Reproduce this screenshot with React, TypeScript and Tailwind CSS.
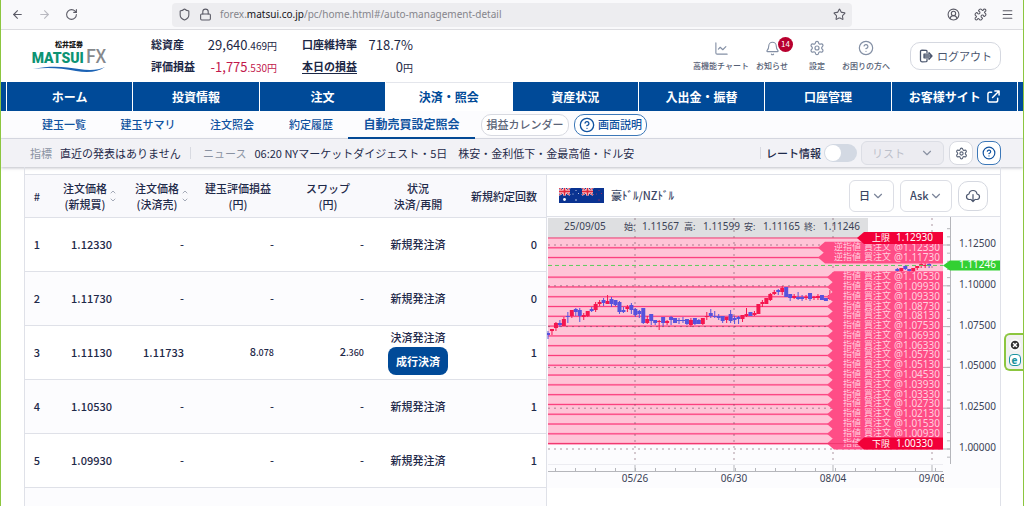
import type { ReactNode } from "react";
import {
  ArrowLeft,
  ArrowRight,
  Bell,
  ChevronDown,
  ChevronUp,
  CircleHelp,
  CircleUserRound,
  CircleX,
  LineChart,
  Lock,
  Menu,
  Puzzle,
  RotateCw,
  Settings,
  Shield,
  Star,
} from "lucide-react";

const MAIN_NAV = ["ホーム", "投資情報", "注文", "決済・照会", "資産状況", "入出金・振替", "口座管理", "お客様サイト"];

const SUB_NAV = [
  { label: "建玉一覧", width: "w-[84px]" },
  { label: "建玉サマリ", width: "w-[84px]" },
  { label: "注文照会", width: "w-[84px]" },
  { label: "約定履歴", width: "w-[74px]" },
];

const ORDERS = [
  { no: 1, buy: "1.12330", status: "新規発注済", count: 0 },
  { no: 2, buy: "1.11730", status: "新規発注済", count: 0 },
  { no: 3, buy: "1.11130", sell: "1.11733", pl: ["8", ".078"], swap: ["2", ".360"], status: "決済発注済", count: 1, closable: true },
  { no: 4, buy: "1.10530", status: "新規発注済", count: 1 },
  { no: 5, buy: "1.09930", status: "新規発注済", count: 1 },
];

const STOP_ORDERS = [1.1233, 1.1173];
const LIMIT_ORDERS = [
  1.1053, 1.0993, 1.0933, 1.0873, 1.0813, 1.0753, 1.0693, 1.0633, 1.0573, 1.0513, 1.0453, 1.0393, 1.0333, 1.0273,
  1.0213, 1.0153, 1.0093, 1.0033,
];

// slot, rising?, high, body top, body bottom, low
const CANDLES: [number, 0 | 1, number, number, number, number][] = [
  [0, 0, 51, 53, 55, 59], [1, 1, 49, 49, 51, 55], [2, 1, 42, 43, 48, 51], [3, 0, 40, 43, 45, 47],
  [4, 1, 37, 39, 46, 46], [5, 0, 32, 36, 37, 43], [6, 1, 30, 30, 36, 38], [7, 0, 28, 29, 32, 36],
  [8, 0, 28, 30, 36, 42], [9, 1, 33, 35, 37, 40], [10, 1, 31, 31, 36, 37], [11, 0, 27, 29, 31, 32],
  [12, 1, 22, 24, 30, 32], [13, 1, 20, 22, 24, 26], [14, 0, 18, 20, 23, 26], [15, 1, 15, 21, 24, 24],
  [16, 0, 17, 19, 24, 27], [17, 0, 20, 20, 25, 26], [18, 0, 21, 22, 32, 34], [19, 0, 27, 30, 32, 33],
  [20, 1, 25, 27, 29, 32], [21, 0, 23, 25, 30, 34], [22, 0, 28, 29, 35, 37], [23, 0, 30, 31, 34, 38],
  [24, 0, 28, 28, 43, 44], [25, 1, 36, 39, 43, 44], [26, 0, 34, 34, 41, 45], [27, 0, 40, 40, 43, 45],
  [28, 1, 40, 41, 42, 50], [29, 0, 37, 37, 43, 46], [30, 1, 40, 41, 43, 45], [31, 0, 36, 37, 40, 45],
  [32, 0, 38, 38, 43, 43], [33, 0, 38, 40, 41, 44], [34, 0, 37, 40, 41, 43], [35, 0, 39, 39, 44, 45],
  [36, 1, 38, 40, 45, 47], [37, 0, 38, 38, 44, 45], [38, 0, 39, 40, 44, 44], [39, 1, 38, 38, 44, 45],
  [40, 1, 32, 36, 37, 40], [41, 0, 29, 33, 36, 38], [42, 0, 31, 36, 37, 38], [43, 0, 34, 36, 38, 40],
  [44, 0, 36, 36, 41, 43], [45, 1, 37, 37, 40, 43], [46, 0, 30, 34, 41, 43], [47, 0, 36, 38, 40, 44],
  [48, 0, 36, 37, 39, 44], [49, 1, 35, 35, 39, 42], [50, 1, 28, 34, 36, 37], [51, 0, 32, 32, 36, 36],
  [52, 1, 31, 33, 35, 36], [53, 1, 24, 24, 34, 34], [54, 1, 20, 22, 24, 27], [55, 1, 18, 18, 24, 24],
  [56, 1, 13, 14, 20, 21], [57, 1, 10, 12, 14, 15], [58, 0, 9, 10, 12, 15], [59, 1, 6, 8, 12, 15],
  [60, 0, 7, 7, 17, 17], [61, 0, 14, 14, 18, 21], [62, 1, 14, 16, 18, 19], [63, 0, 12, 17, 19, 20],
  [64, 0, 15, 17, 19, 21], [65, 1, 15, 17, 18, 20], [66, 0, 13, 13, 19, 21], [67, 1, 16, 17, 18, 20],
  [68, 1, 14, 16, 18, 20], [69, 0, 15, 15, 20, 20], [70, 0, 18, 18, 21, 21], [71, 1, 10, 15, 19, 20],
  [88, 0, -12, -11, -9, -8], [89, 1, -12, -12, -9, -8], [90, 0, -15, -14, -11, -10], [91, 0, -11, -11, -9, -8],
  [92, 1, -12, -12, -9, -8], [93, 1, -14, -14, -12, -10], [94, 1, -17, -16, -14, -12], [95, 1, -17, -15, -14, -12],
  [96, 0, -17, -16, -14, -12],
];

const AXIS_PRICES = [1.125, 1.1, 1.075, 1.05, 1.025, 1.0];
const AXIS_DATES = [
  { x: 88, label: "05/26" },
  { x: 187, label: "06/30" },
  { x: 286, label: "08/04" },
  { x: 385, label: "09/06" },
];

const PLOT_RIGHT = 396;
const priceY = (price: number) => 232 - (price - 1) * 1632;

function tag(tip: number, y: number, right: number, half: number) {
  return `${tip},${y} ${tip + 7},${y - half} ${right},${y - half} ${right},${y + half} ${tip + 7},${y + half}`;
}

function OrderTag({ price, stop }: { price: number; stop?: boolean }) {
  const y = priceY(price);
  return (
    <g>
      <polygon points={tag(stop ? 271 : 280, y, PLOT_RIGHT, 6)} fill="#ff4d86" />
      <g fill="#ffd0df" fontSize="9">
        <text x={stop ? 287 : 296} y={y + 2}>{stop ? "逆指値" : "指値"}</text>
        <text x="317" y={y + 2}>買注文</text>
        <text x="347" y={y + 3} fontSize="10">@{price.toFixed(5)}</text>
      </g>
    </g>
  );
}

function LimitTag({ price, label }: { price: number; label: string }) {
  const y = priceY(price);
  return (
    <g>
      <line x1="1" x2="320" y1={y} y2={y} stroke="#f0386f" />
      <polygon points={tag(310, y, PLOT_RIGHT, 6)} fill="#f20038" />
      <text x="325" y={y + 3} fontSize="9" fill="#fff">{label}</text>
      <text x="349" y={y + 3} fontSize="10" fill="#fff">{price.toFixed(5)}</text>
    </g>
  );
}

function PriceChart() {
  const top = priceY(1.1293);
  const bottom = priceY(1.0033);
  const now = priceY(1.11246);
  const minorPrices = Array.from({ length: 29 }, (_, i) => 0.995 + i * 0.005);
  const minorDates = Array.from({ length: 20 }, (_, i) => 9 + i * 20);

  return (
    <svg viewBox="0 0 453 271" className="block w-full font-['Noto_Sans','Noto_Sans_CJK_JP',sans-serif]" role="img" aria-label="豪ドル/NZドル 日足">
      <rect width="453" height="271" fill="#fcfcfe" />
      <rect x="1" y="1" width="320" height="21" fill="#dedfe1" />
      <rect x="1" y={top} width={PLOT_RIGHT - 1} height={bottom - top} fill="#ffc4d7" />

      {[...STOP_ORDERS, ...LIMIT_ORDERS].map((p) => (
        <g key={p}>
          <line x1="1" x2="290" y1={priceY(p)} y2={priceY(p)} stroke="#ff9dbc" strokeWidth="2" />
          <line x1="1" x2="290" y1={priceY(p)} y2={priceY(p)} stroke="#fb3b7c" />
        </g>
      ))}
      <g stroke="#6b4455" strokeOpacity="0.55" strokeDasharray="2 4">
        {AXIS_PRICES.map((p) => (
          <line key={p} x1="1" x2={PLOT_RIGHT} y1={priceY(p)} y2={priceY(p)} />
        ))}
        {AXIS_DATES.map((d) => (
          <line key={d.x} x1={d.x} x2={d.x} y1="1" y2="246" />
        ))}
      </g>

      {CANDLES.map(([slot, up, high, t, b, low]) => {
        const x = 1 + slot * 3.97;
        const color = up ? "#f5164f" : "#5752dc";
        return (
          <g key={slot} fill={color}>
            <rect x={x - 0.5} y={high + 63} width="1" height={low - high} />
            <rect x={x - 2} y={t + 63} width="4" height={Math.max(b - t, 1)} />
          </g>
        );
      })}

      <line x1="1" x2={PLOT_RIGHT} y1={now} y2={now} stroke="#5ccb5c" strokeDasharray="4 3" />
      {STOP_ORDERS.map((p) => <OrderTag key={p} price={p} stop />)}
      {LIMIT_ORDERS.map((p) => <OrderTag key={p} price={p} />)}
      <LimitTag price={1.1293} label="上限" />
      <LimitTag price={1.0033} label="下限" />

      <g fill="#3b4256" fontSize="10">
        <text x="17" y="13">25/09/05</text>
        <text x="77" y="13" fontSize="9">始:</text>
        <text x="95" y="13">1.11567</text>
        <text x="137" y="13" fontSize="9">高:</text>
        <text x="156" y="13">1.11599</text>
        <text x="197" y="13" fontSize="9">安:</text>
        <text x="216" y="13">1.11165</text>
        <text x="257" y="13" fontSize="9">終:</text>
        <text x="276" y="13">1.11246</text>
      </g>

      {/* price axis */}
      <line x1="1" x2={PLOT_RIGHT} y1="247.5" y2="247.5" stroke="#ececf1" />
      <g stroke="#b5b6bb">
        <line x1="403.5" x2="403.5" y1="0" y2="247" />
        {minorPrices.map((p) => (
          <line key={p} x1="400" x2="403" y1={priceY(p)} y2={priceY(p)} />
        ))}
        {AXIS_PRICES.map((p) => (
          <line key={p} x1="396" x2="403" y1={priceY(p)} y2={priceY(p)} />
        ))}
      </g>
      {AXIS_PRICES.map((p) => (
        <text key={p} x="412" y={priceY(p) + 2} fontSize="10" fill="#3b4256">{p.toFixed(5)}</text>
      ))}
      <polygon points={tag(396, now, 453, 5)} fill="#33d033" />
      <text x="412" y={now + 3} fontSize="10" fill="#fff">1.11246</text>

      {/* date axis */}
      <g stroke="#b5b6bb">
        <line x1="1" x2={PLOT_RIGHT} y1="254.5" y2="254.5" />
        {minorDates.map((x) => (
          <line key={x} x1={x - 0.5} x2={x - 0.5} y1="251" y2="254" />
        ))}
        {AXIS_DATES.map((d) => (
          <line key={d.x} x1={d.x} x2={d.x} y1="248" y2="254" />
        ))}
      </g>
      <g fontSize="10" fill="#3b4256" textAnchor="middle">
        {AXIS_DATES.map((d) => (
          <text key={d.x} x={d.x} y="265">{d.label}</text>
        ))}
      </g>
      <rect x="397" y="255" width="56" height="15" fill="#fcfcfe" />
    </svg>
  );
}

function UnionFlag({ x }: { x: number }) {
  return (
    <g transform={`translate(${x} 0)`}>
      <path d="M0 0 11 7M11 0 0 7" stroke="#fff" strokeWidth="2" />
      <path d="M0 0 11 7M11 0 0 7" stroke="#e2293c" strokeWidth="1" />
      <path d="M5.5 0V7.5M0 3.5H11" stroke="#fff" strokeWidth="3" />
      <path d="M5.5 0V7.5M0 3.5H11" stroke="#e2293c" strokeWidth="1.8" />
    </g>
  );
}

function PairFlags() {
  return (
    <svg viewBox="0 0 45 15" className="h-[15px] w-[45px]" aria-hidden="true">
      <rect width="45" height="15" fill="#0a3391" />
      <UnionFlag x={0} />
      <UnionFlag x={23} />
      <g fill="#fff">
        <circle cx="5.5" cy="11.5" r="1.4" />
        <circle cx="17" cy="2.5" r=".5" />
        <circle cx="14" cy="6" r=".5" />
        <circle cx="19.5" cy="5.5" r=".5" />
        <circle cx="17" cy="12" r=".7" />
      </g>
      <g fill="#a82a58">
        <circle cx="40" cy="2.5" r=".6" />
        <circle cx="37.5" cy="6" r=".6" />
        <circle cx="42.5" cy="5.5" r=".6" />
        <circle cx="40" cy="12" r=".7" />
      </g>
    </svg>
  );
}

function Logo() {
  return (
    <a href="#home" className="flex w-[80px] flex-col items-center leading-none" aria-label="松井証券 MATSUI FX">
      <span className="text-[7px] leading-[8px] font-black text-[#1a1a1a]">松井証券</span>
      <span className="flex items-baseline gap-[2px] leading-[15px]">
        <span className="font-['Roboto',sans-serif] text-[14px] font-black text-[#0d9373]">MATSUI</span>
        <span className="text-[18px] font-medium text-[#85888c]">FX</span>
      </span>
      <svg viewBox="0 0 74 6" className="h-[6px] w-[74px]" aria-hidden="true">
        <path d="M1 3C20-1 34 1 47 3 58 5 67 4 73 1 66 6 56 7 44 5 29 2 15 1 1 3Z" fill="#1c63b5" />
      </svg>
    </a>
  );
}

function ExitIcon() {
  return (
    <svg viewBox="0 0 14 14" className="size-[14px]" fill="none" stroke="currentColor" strokeWidth="1.3" strokeLinecap="round" strokeLinejoin="round" aria-hidden="true">
      <path d="M8 3.5V2.2Q8 1.5 7.2 1.3L3 1.2Q1.5 1.2 1.5 2.7V11.3Q1.5 12.8 3 12.8L7.2 12.7Q8 12.5 8 11.8V10.5M5 5.2V8.8H10M5 5.2H10M10 3.8 13 7 10 10.2M5 7H12.5" />
    </svg>
  );
}

function ExternalIcon() {
  return (
    <svg viewBox="0 0 14 14" className="size-[13px]" fill="none" stroke="currentColor" strokeWidth="1.6" strokeLinecap="round" strokeLinejoin="round" aria-hidden="true">
      <path d="M5 2.5H3Q1 2.5 1 4.5V11Q1 13 3 13H9.5Q11.5 13 11.5 11V9M8.5 1H13V5.5M13 1 6 8" />
    </svg>
  );
}

function CloudIcon() {
  return (
    <svg viewBox="0 0 16 16" className="size-4" fill="none" stroke="currentColor" strokeWidth="1.2" strokeLinecap="round" strokeLinejoin="round" aria-hidden="true">
      <path d="M5 11.5H4Q1.5 11 1.5 8.7T4 6Q4.5 2.5 8 2.5T12 6Q14.5 6.4 14.5 8.8T12 11.5H11M8 6.5V13.5M5.8 11.3 8 13.5 10.2 11.3" />
    </svg>
  );
}

function HeaderLink({ icon, label, width, badge }: { icon: ReactNode; label: string; width: string; badge?: number }) {
  return (
    <a href="#" className={`${width} relative flex flex-col items-center gap-1 text-[#8490a5]`}>
      {icon}
      <span className="text-[8px] leading-[12px] font-medium whitespace-nowrap text-[#566075]">{label}</span>
      {badge !== undefined && (
        <span className="absolute -top-1 left-[29px] flex size-[15px] items-center justify-center rounded-full bg-[#b8002e] text-[8px] text-white">
          {badge}
        </span>
      )}
    </a>
  );
}

function SortMarks() {
  return (
    <span className="absolute top-1/2 right-[4px] flex -translate-y-1/2 flex-col text-[#a5abb8]">
      <ChevronUp className="size-[8px]" strokeWidth={3} />
      <ChevronDown className="size-[8px]" strokeWidth={3} />
    </span>
  );
}

function ChartSelect({ label, value, width }: { label: string; value: string; width: string }) {
  return (
    <span className={`${width} relative block`}>
      <select
        aria-label={label}
        className="h-8 w-full appearance-none rounded-md border border-[#dcdee5] bg-white pl-[9px] text-[11px] font-medium text-[#3b4663]"
      >
        <option>{value}</option>
      </select>
      <ChevronDown className="pointer-events-none absolute top-[9px] right-[9px] size-[14px] text-[#7b8499]" />
    </span>
  );
}

function Amount({ parts }: { parts?: string[] }) {
  if (!parts) return <>-</>;
  return (
    <>
      {parts[0]}
      <span className="text-[9px]">{parts[1]}</span>
    </>
  );
}

export default function App() {
  return (
    <div className="relative flex h-screen flex-col overflow-hidden border-x border-[#8cc63f] bg-white font-['Noto_Sans_CJK_JP',sans-serif] text-[11px] text-[#1f2a4a]">
      {/* browser toolbar */}
      <div className="flex h-[30px] shrink-0 items-center border-b border-[#dcdce0] bg-[#f9f9fb] text-[#5b5b66]">
        <div className="flex w-[171px] items-center gap-[14px] pl-[10px]">
          <button aria-label="戻る"><ArrowLeft className="size-[13px]" /></button>
          <button aria-label="進む" className="text-[#b9b9c0]"><ArrowRight className="size-[13px]" /></button>
          <button aria-label="再読み込み"><RotateCw className="size-[13px]" /></button>
        </div>
        <div className="flex h-6 flex-1 items-center gap-2 rounded bg-[#ededf0] px-[6px]">
          <Shield className="size-[13px]" />
          <Lock className="size-[13px]" />
          <p className="flex-1 font-['Noto_Sans',sans-serif] text-[10px] text-[#85858c]">
            forex.<span className="text-[#15141a]">matsui.co.jp</span>/pc/home.html#/auto-management-detail
          </p>
          <Star className="size-[13px]" />
        </div>
        <div className="flex w-[171px] items-center justify-end gap-[14px] pr-[9px]">
          <CircleUserRound className="size-[13px]" />
          <Puzzle className="size-[13px]" />
          <Menu className="size-[13px]" />
        </div>
      </div>

      <header className="flex h-[52px] shrink-0 items-center pr-[22px] pl-[28px]">
        <Logo />
        <dl className="ml-[42px] grid grid-cols-[50px_76px_80px_56px] text-[10px] leading-[21px] text-[#1c2745]">
          <dt className="text-[11px] font-bold">総資産</dt>
          <dd className="text-right whitespace-nowrap"><span className="text-[13px]">29,640</span>.469円</dd>
          <dt className="pl-[25px] text-[11px] font-bold whitespace-nowrap">口座維持率</dt>
          <dd className="text-right text-[13px] whitespace-nowrap">718.7%</dd>
          <dt className="text-[11px] font-bold">評価損益</dt>
          <dd className="text-right whitespace-nowrap text-[#c2184b]"><span className="text-[13px]">-1,775</span>.530円</dd>
          <dt className="pl-[25px] text-[11px] font-bold whitespace-nowrap"><a href="#" className="underline underline-offset-2">本日の損益</a></dt>
          <dd className="text-right whitespace-nowrap"><span className="text-[13px]">0</span>円</dd>
        </dl>
        <div className="ml-auto flex items-center">
          <HeaderLink width="w-[56px]" label="高機能チャート" icon={<LineChart className="size-[15px]" strokeWidth={1.8} />} />
          <HeaderLink width="w-[46px]" label="お知らせ" badge={14} icon={<Bell className="size-[15px]" strokeWidth={1.8} />} />
          <HeaderLink width="w-[44px]" label="設定" icon={<Settings className="size-[16px]" strokeWidth={1.8} />} />
          <HeaderLink width="w-[54px]" label="お困りの方へ" icon={<CircleHelp className="size-[16px]" strokeWidth={1.8} />} />
          <button className="ml-[17px] flex h-7 w-[91px] items-center justify-center gap-1 rounded-[10px] border border-[#d5d8e0] text-[#4a556d]">
            <ExitIcon />
            ログアウト
          </button>
        </div>
      </header>

      <nav className="flex h-[29px] shrink-0 gap-px text-[12px] font-bold text-white">
        <span className="w-[5px] bg-[#004a98]" />
        {MAIN_NAV.map((label) => (
          <a
            key={label}
            href="#"
            className={
              label === "決済・照会"
                ? "flex flex-1 items-center justify-center border-t border-[#e4e6ec] bg-white text-[#004a98]"
                : "flex flex-1 items-center justify-center gap-[6px] bg-[#004a98]"
            }
          >
            {label}
            {label === "お客様サイト" && <ExternalIcon />}
          </a>
        ))}
        <span className="w-[5px] bg-[#004a98]" />
      </nav>

      <nav className="flex h-7 shrink-0 items-center border-b border-[#dfe1e8] bg-[#fcfcfe] pl-[21px] font-medium text-[#10529f]">
        {SUB_NAV.map((item) => (
          <a key={item.label} href="#" className={`${item.width} text-center`}>{item.label}</a>
        ))}
        <a href="#" className="flex h-7 w-[127px] items-center justify-center border-b-2 border-[#004a98] text-[12px] font-bold">
          自動売買設定照会
        </a>
        <button className="ml-[6px] h-[22px] w-[88px] rounded-[10px] border border-[#d8dae1] bg-white text-[#5c6578]">損益カレンダー</button>
        <button className="ml-[5px] flex h-[22px] w-[73px] items-center justify-center gap-[3px] rounded-[10px] border border-[#3c78b8] bg-white">
          <CircleHelp className="size-[16px]" />
          画面説明
        </button>
      </nav>

      <div className="flex h-7 shrink-0 items-center bg-[#f2f2f6] pr-[22px] pl-[29px] shadow-[0_1px_3px_rgba(60,65,90,0.35)]">
        <span className="text-[#8a92a2]">指標</span>
        <span className="ml-2 w-[126px] whitespace-nowrap">直近の発表はありません</span>
        <span className="ml-[4px] h-3 w-px bg-[#d8dae1]" />
        <span className="ml-3 text-[#8a92a2]">ニュース</span>
        <a href="#" className="ml-2 whitespace-nowrap">06:20 NYマーケットダイジェスト・5日　株安・金利低下・金最高値・ドル安</a>
        <div className="ml-auto flex items-center">
          <span className="mr-[5px] h-3 w-px bg-[#d8dae1]" />
          <label htmlFor="rate" className="font-medium">レート情報</label>
          <input
            id="rate"
            type="checkbox"
            role="switch"
            className="ml-[3px] h-[18px] w-[33px] appearance-none rounded-full bg-[#d3d9e3] before:m-px before:block before:size-4 before:rounded-full before:bg-white"
          />
          <span className="relative ml-1 block">
            <select disabled aria-label="表示形式" className="h-6 w-[83px] appearance-none rounded-md border border-[#dcdee5] bg-[#ececf1] pl-[10px] text-[#bcc0ca] opacity-100">
              <option>リスト</option>
            </select>
            <ChevronDown className="pointer-events-none absolute top-[5px] right-[10px] size-[14px] text-[#8a92a2]" />
          </span>
          <button aria-label="設定" className="ml-[5px] flex size-6 items-center justify-center rounded-lg border border-[#d8dae1] bg-white text-[#566075]">
            <Settings className="size-[13px]" />
          </button>
          <button aria-label="ヘルプ" className="ml-1 flex size-6 items-center justify-center rounded-lg border border-[#3c78b8] bg-white text-[#10529f]">
            <CircleHelp className="size-[14px]" />
          </button>
        </div>
      </div>

      <main className="mr-[22px] ml-[23px] flex min-h-0 flex-1 border-x border-[#dfe1e8] pt-[7px]">
        <div className="w-[521px] shrink-0 border-t border-[#dfe1e8] bg-[#fcfcfe]">
          <table className="w-full table-fixed font-medium">
            <colgroup>
              <col className="w-[24px]" />
              <col className="w-[72px]" />
              <col className="w-[72px]" />
              <col className="w-[90px]" />
              <col className="w-[90px]" />
              <col className="w-[90px]" />
              <col />
            </colgroup>
            <thead>
              <tr className="h-[42px] border-b border-[#dfe1e8] bg-[#f9f9fc] leading-4">
                <th className="font-medium">#</th>
                <th className="relative font-medium">注文価格<br />(新規買)<SortMarks /></th>
                <th className="relative font-medium">注文価格<br />(決済売)<SortMarks /></th>
                <th className="font-medium">建玉評価損益<br />(円)</th>
                <th className="font-medium">スワップ<br />(円)</th>
                <th className="font-medium">状況<br />決済/再開</th>
                <th className="pr-[9px] text-right font-medium">新規約定回数</th>
              </tr>
            </thead>
            <tbody>
              {ORDERS.map((o) => (
                <tr key={o.no} className="h-[54px] border-b border-[#dfe1e8] text-right leading-4 odd:bg-white">
                  <td className="text-center">{o.no}</td>
                  <td className="pr-[9px]">{o.buy}</td>
                  <td className="pr-[9px]">{o.sell ?? "-"}</td>
                  <td className="pr-[9px]"><Amount parts={o.pl} /></td>
                  <td className="pr-[9px]"><Amount parts={o.swap} /></td>
                  <td className="text-center">
                    {o.status}
                    {o.closable && (
                      <button className="mx-auto mt-[2px] block h-7 w-[60px] rounded-lg bg-[#004a98] font-bold text-white">成行決済</button>
                    )}
                  </td>
                  <td className="pr-[9px]">{o.count}</td>
                </tr>
              ))}
            </tbody>
          </table>
        </div>

        <section className="min-w-0 flex-1 border-t border-l border-[#dfe1e8]">
          <div className="flex h-[42px] items-center border-b border-[#dfe1e8] pr-[12px] pl-[12px]">
            <PairFlags />
            <h2 className="ml-[7px] flex-1 font-medium text-[#3b4663]">豪ﾄﾞﾙ/NZﾄﾞﾙ</h2>
            <ChartSelect label="足種" value="日" width="w-[45px]" />
            <span className="w-[6px]" />
            <ChartSelect label="レート種別" value="Ask" width="w-[52px]" />
            <button aria-label="ダウンロード" className="ml-[6px] flex size-[30px] items-center justify-center rounded-[10px] border border-[#d5d8e0] text-[#4a556d]">
              <CloudIcon />
            </button>
          </div>
          <PriceChart />
        </section>
      </main>

      {/* floating extension panel */}
      <aside className="absolute top-[333px] right-0 flex h-[38px] w-[19px] flex-col items-center justify-center gap-[3px] rounded-l-md border-2 border-r-0 border-[#8cc63f] bg-[#f1f1f1]">
        <button aria-label="閉じる"><CircleX className="size-3 fill-[#333] text-white" strokeWidth={3} /></button>
        <button aria-label="パネルを開く" className="flex size-3 items-center justify-center rounded border border-[#1c93a0] bg-white text-[10px] leading-none font-black text-[#1c93a0]">e</button>
      </aside>
    </div>
  );
}
